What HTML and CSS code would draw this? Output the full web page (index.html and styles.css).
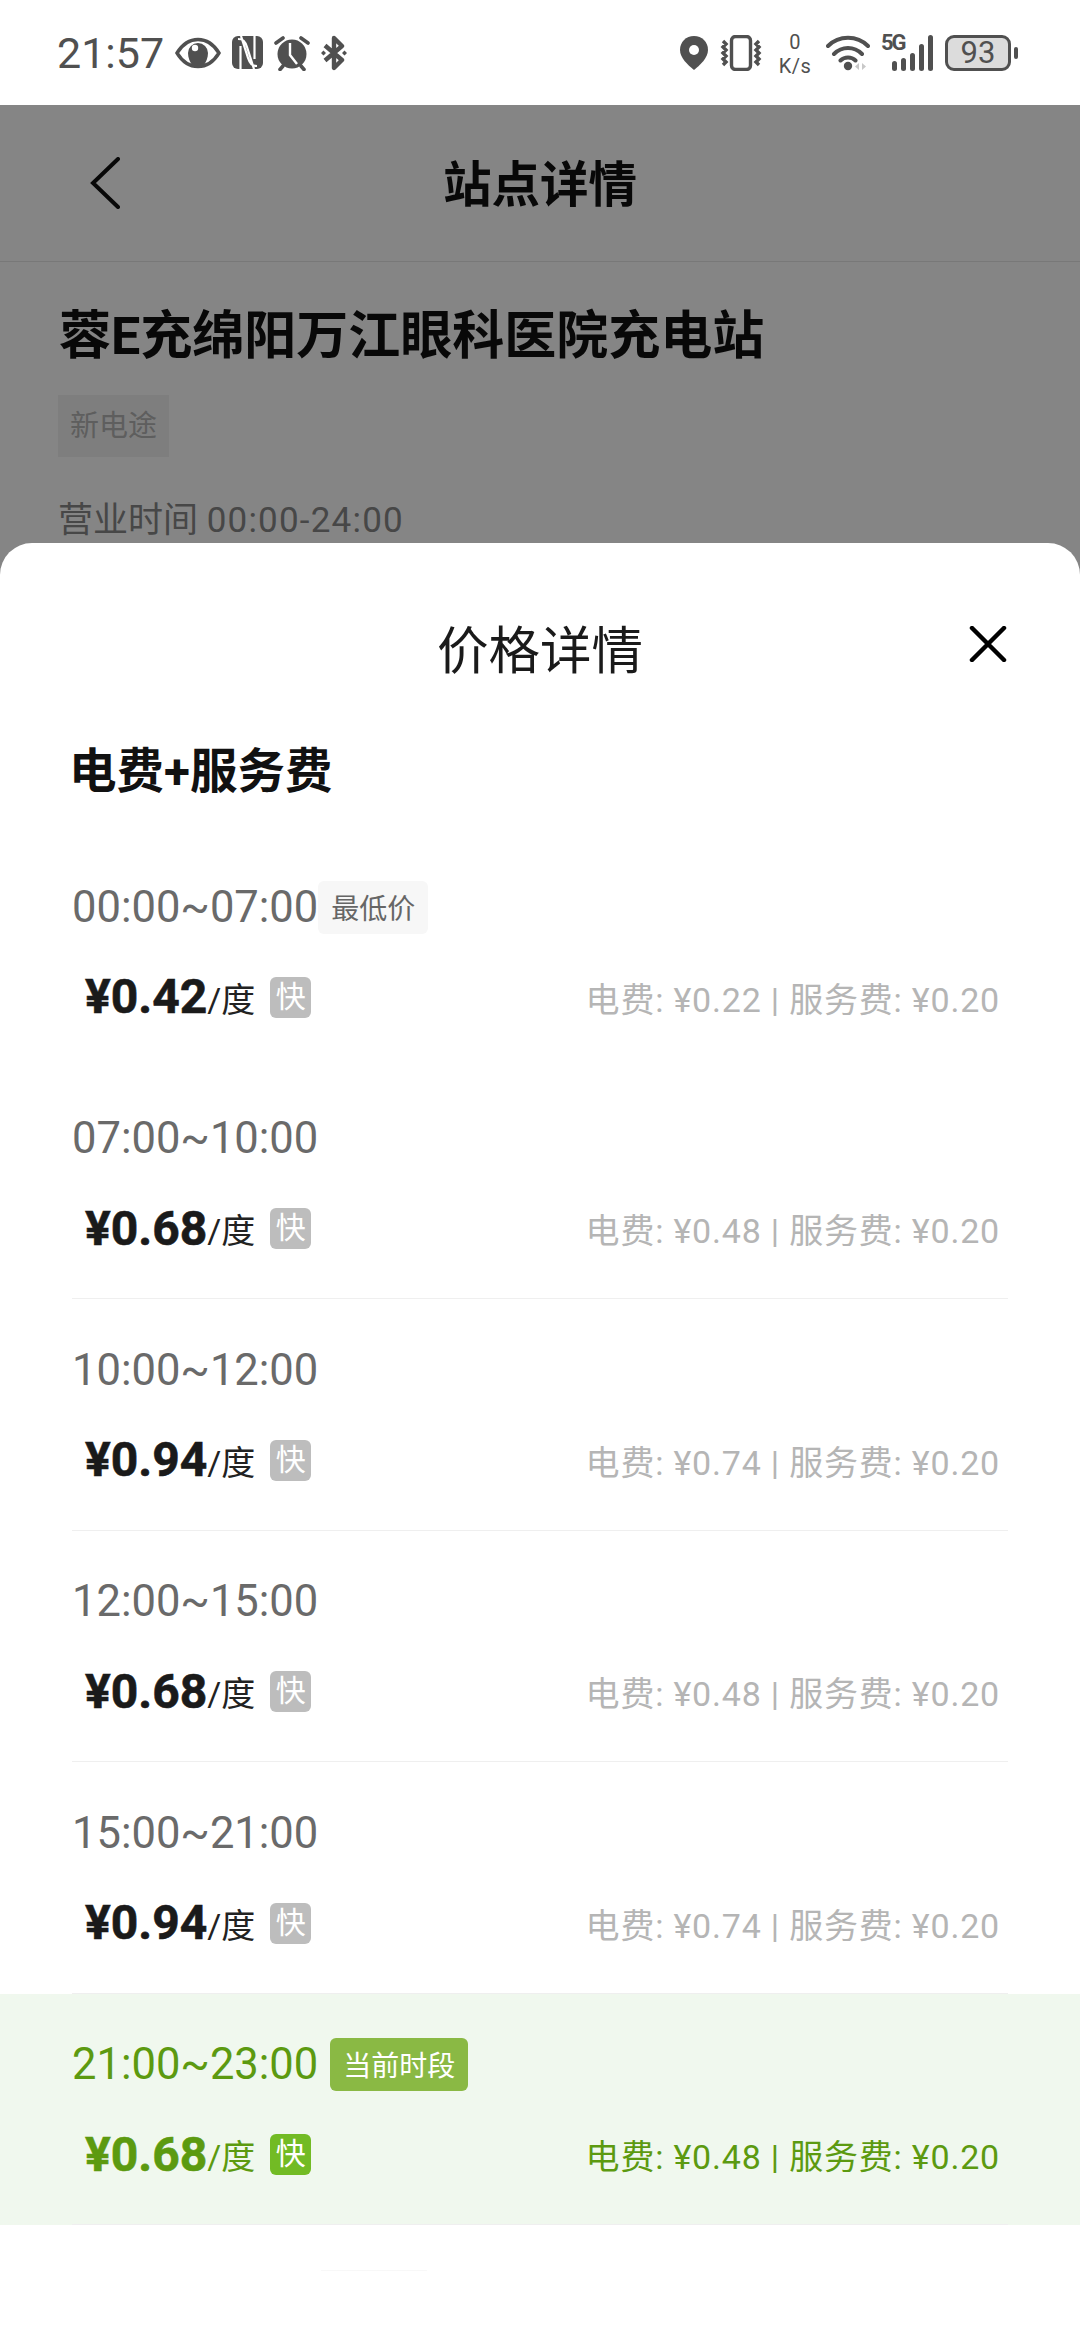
FILE: index.html
```html
<!DOCTYPE html>
<html lang="zh-CN">
<head>
	<meta charset="UTF-8">
	<meta name="viewport" content="width=device-width, initial-scale=1.0">
	<title>站点详情</title>
	<link rel="stylesheet" href="styles.css">
</head>
<body>
	<!-- status bar -->
	<div class="status">
		<div class="status-left">
			<span class="clock">21:57</span>
			<svg class="ico" width="46" height="32" viewBox="0 0 46 32">
				<path d="M2 16C7.500 7 14 2.500 23 2.500S38.500 7 44 16C38.500 25 32 29.500 23 29.500S7.500 25 2 16Z" fill="none" stroke="#505050" stroke-width="3.400"/>
				<path d="M13 16a10 10 0 0 1 20 0c0 5-2 9-4 12h-12c-2-3-4-7-4-12Z" fill="#505050"/>
				<circle cx="20" cy="11" r="3.200" fill="#fff"/>
			</svg>
			<svg class="ico nfc" width="31" height="33" viewBox="0 0 31 33">
				<rect width="31" height="33" rx="6" fill="#505050"/>
				<path d="M8.500 33V10M6 3c5 0 7 2 9 8l7 22M22.500 0v23M25 30c-5 0-7-2-9-8L9 0" fill="none" stroke="#fff" stroke-width="2.200"/>
			</svg>
			<svg class="ico alarm" width="36" height="36" viewBox="0 0 36 36">
				<circle cx="18" cy="19" r="14.500" fill="#505050"/>
				<path d="M16 8v12l7 9" fill="none" stroke="#fff" stroke-width="2.400"/>
				<path d="M2 8 9 3M34 8 27 3M9 31l-3 3.500M27 31l3 3.500" fill="none" stroke="#505050" stroke-width="3.600" stroke-linecap="round"/>
			</svg>
			<svg class="ico" width="26" height="36" viewBox="0 0 26 36">
				<path d="M4 10.500 21 25l-8 8V3l8 8L4 25.500" fill="none" stroke="#505050" stroke-width="4.400" stroke-linejoin="round"/>
				<path d="M0 18l2.500-2.500L5 18l-2.500 2.500ZM21 18l2.500-2.500L26 18l-2.500 2.500Z" fill="#505050"/>
			</svg>
		</div>
		<div class="status-right">
			<svg class="ico" width="28" height="34" viewBox="0 0 28 34">
				<path d="M14 0C6 0 0 6 0 14c0 8 8 15 14 20 6-5 14-12 14-20C28 6 22 0 14 0Z" fill="#505050"/>
				<circle cx="14" cy="14" r="5" fill="#fff"/>
			</svg>
			<svg class="ico" width="42" height="36" viewBox="0 0 42 36">
				<rect x="11.500" y="1.500" width="19" height="33" rx="4" fill="none" stroke="#505050" stroke-width="3.400"/>
				<path d="M3 6l3 3-3 3 3 3-3 3 3 3-3 3 3 3-3 3M39 6l-3 3 3 3-3 3 3 3-3 3 3 3-3 3 3 3" fill="none" stroke="#505050" stroke-width="3.400"/>
			</svg>
			<div class="speed"><span>0</span><span>K/s</span></div>
			<svg class="ico" width="44" height="36" viewBox="0 0 44 36">
				<path d="M2 11C13 0 31 0 42 11M8 19c8-8 20-8 28 0M14.500 25.500c4-4 11-4 15 0" fill="none" stroke="#505050" stroke-width="4" stroke-linecap="round"/>
				<circle cx="22" cy="31" r="4.200" fill="#505050"/>
				<path d="M33 28v7l-4-3.500ZM36 28v7l4-3.500Z" fill="#c8c8c8"/>
			</svg>
			<div class="signal">
				<span class="signal-type">5G</span>
				<div class="bars">
					<i class="bar-1"></i><i class="bar-2"></i><i class="bar-3"></i><i class="bar-4"></i><i class="bar-5"></i>
				</div>
			</div>
			<div class="battery"><div class="battery-body">93</div><i class="battery-nub"></i></div>
		</div>
	</div>

	<!-- station page, dimmed behind the sheet -->
	<div class="page">
		<div class="nav">
			<svg class="back" width="32" height="52" viewBox="0 0 32 52">
				<path d="M29 2 4 26l25 24" fill="none" stroke="#111" stroke-width="4" stroke-linecap="round"/>
			</svg>
			<h1 class="nav-title">站点详情</h1>
		</div>
		<div class="station">
			<h2 class="station-name">蓉E充绵阳万江眼科医院充电站</h2>
			<span class="station-tag">新电途</span>
			<p class="station-hours">营业时间 <span class="hours-val">00:00-24:00</span></p>
		</div>
	</div>
	<div class="mask"></div>

	<!-- price sheet -->
	<div class="sheet">
		<div class="sheet-head">
			<span class="sheet-title">价格详情</span>
			<svg class="close" width="38" height="36" viewBox="0 0 38 36">
				<path d="M3 2l32 32M35 2 3 34" fill="none" stroke="#000" stroke-width="4.500" stroke-linecap="round"/>
			</svg>
		</div>
		<h3 class="sheet-sub">电费+服务费</h3>

		<div class="row row-first">
			<div class="row-inner">
				<div class="row-time">00:00~07:00<span class="tag-low">最低价</span></div>
				<div class="row-price">
					<b>¥0.42</b><span class="unit">/度</span><span class="fast">快</span>
					<span class="fee">电费: ¥0.22 | 服务费: ¥0.20</span>
				</div>
			</div>
		</div>
		<div class="row">
			<div class="row-inner">
				<div class="row-time">07:00~10:00</div>
				<div class="row-price">
					<b>¥0.68</b><span class="unit">/度</span><span class="fast">快</span>
					<span class="fee">电费: ¥0.48 | 服务费: ¥0.20</span>
				</div>
			</div>
		</div>
		<div class="row">
			<div class="row-inner">
				<div class="row-time">10:00~12:00</div>
				<div class="row-price">
					<b>¥0.94</b><span class="unit">/度</span><span class="fast">快</span>
					<span class="fee">电费: ¥0.74 | 服务费: ¥0.20</span>
				</div>
			</div>
		</div>
		<div class="row">
			<div class="row-inner">
				<div class="row-time">12:00~15:00</div>
				<div class="row-price">
					<b>¥0.68</b><span class="unit">/度</span><span class="fast">快</span>
					<span class="fee">电费: ¥0.48 | 服务费: ¥0.20</span>
				</div>
			</div>
		</div>
		<div class="row">
			<div class="row-inner">
				<div class="row-time">15:00~21:00</div>
				<div class="row-price">
					<b>¥0.94</b><span class="unit">/度</span><span class="fast">快</span>
					<span class="fee">电费: ¥0.74 | 服务费: ¥0.20</span>
				</div>
			</div>
		</div>
		<div class="row row-now">
			<div class="row-inner">
				<div class="row-time">21:00~23:00<span class="tag-now">当前时段</span></div>
				<div class="row-price">
					<b>¥0.68</b><span class="unit">/度</span><span class="fast">快</span>
					<span class="fee">电费: ¥0.48 | 服务费: ¥0.20</span>
				</div>
			</div>
		</div>
		<div class="sheet-edge"></div>
	</div>
</body>
</html>
```

FILE: styles.css
```css
* {
	box-sizing: border-box;
}
body {
	position: relative;
	width: 1080px;
	height: 2340px;
	margin: 0;
	overflow: hidden;
	background: #fff;
	font-family: Roboto, "Noto Sans CJK SC", sans-serif;
}
h1, h2, h3, p {
	margin: 0;
}

/* status bar */
.status {
	display: flex;
	justify-content: space-between;
	align-items: center;
	height: 105px;
	padding: 0 62px 0 57px;
	color: #505050;
}
.status-left,
.status-right {
	display: flex;
	align-items: center;
}
.status-left {
	gap: 11px;
}
.status-right {
	gap: 12px;
}
.ico {
	display: block;
	flex: none;
}
.clock {
	font-size: 43px;
	line-height: 48px;
}
.speed {
	display: flex;
	flex-direction: column;
	align-items: center;
	width: 34px;
	margin: 3px 2px 0 4px;
	font-size: 20px;
	line-height: 24px;
	letter-spacing: .5px;
}
.signal {
	position: relative;
	width: 52px;
	height: 36px;
	margin-left: -1px;
}
.signal-type {
	position: absolute;
	top: -4px;
	left: 0;
	font-size: 22px;
	line-height: 24px;
	font-weight: 700;
	letter-spacing: -2px;
}
.bars {
	position: absolute;
	right: 0;
	bottom: 0;
	display: flex;
	align-items: flex-end;
	gap: 3.500px;
}
.bars i {
	display: block;
	width: 5.500px;
	background: #505050;
	border-radius: 3px;
}
.bar-1 { height: 10px; }
.bar-2 { height: 13px; }
.bar-3 { height: 18px; }
.bar-4 { height: 27px; }
.bar-5 { height: 36px; }
.battery {
	display: flex;
	align-items: center;
	gap: 3px;
}
.battery-body {
	width: 66px;
	height: 36px;
	border: 3px solid #505050;
	border-radius: 9px;
	background: #dcdcdc;
	font-size: 31px;
	line-height: 30px;
	text-align: center;
}
.battery-nub {
	display: block;
	width: 4px;
	height: 12px;
	background: #505050;
	border-radius: 2px;
}

/* page behind the sheet */
.page {
	height: 2235px;
}
.nav {
	position: relative;
	display: flex;
	justify-content: center;
	align-items: center;
	height: 157px;
	padding-top: 5px;
	border-bottom: 1px solid #e6e6e6;
}
.back {
	position: absolute;
	left: 89px;
	top: 52px;
}
.nav-title {
	font-size: 48.500px;
	line-height: 60px;
	font-weight: 700;
	color: #111;
}
.station {
	display: flex;
	flex-direction: column;
	align-items: flex-start;
	padding: 39px 58px 0;
}
.station-name {
	margin-left: 1px;
	font-size: 52px;
	line-height: 72px;
	font-weight: 700;
	color: #111;
}
.station-tag {
	margin-top: 22px;
	padding: 0 12px;
	background: #f2f2f2;
	color: #b4b4b4;
	font-size: 29px;
	line-height: 62px;
}
.station-hours {
	margin-top: 39px;
	font-size: 35px;
	line-height: 50px;
	color: #888;
}
.hours-val {
	font-size: 35px;
	letter-spacing: 1.200px;
}
.mask {
	position: absolute;
	left: 0;
	right: 0;
	top: 105px;
	bottom: 0;
	background: rgba(0, 0, 0, .48);
}

/* price sheet */
.sheet {
	position: absolute;
	left: 0;
	right: 0;
	top: 543px;
	bottom: 0;
	background: #fff;
	border-radius: 32px 32px 0 0;
}
.sheet-head {
	position: relative;
	display: flex;
	justify-content: center;
	align-items: center;
	height: 176px;
	padding-top: 42px;
}
.sheet-title {
	font-size: 51.500px;
	line-height: 70px;
	color: #1a1a1a;
}
.close {
	position: absolute;
	left: 969px;
	top: 83px;
}
.sheet-sub {
	height: 117px;
	padding: 21px 69px 0;
	font-size: 47.500px;
	line-height: 64px;
	font-weight: 700;
	color: #111;
}
.row {
	height: 231.500px;
	padding: 0 72px;
}
.row-inner {
	display: flex;
	flex-direction: column;
	height: 100%;
	padding-top: 44px;
	border-bottom: 1px solid #efefef;
}
.row-first .row-inner {
	border-bottom: 0;
}
.row-time {
	display: flex;
	align-items: center;
	height: 54px;
	font-size: 43.500px;
	color: #6a6a6a;
}
.tag-low,
.tag-now {
	display: block;
	height: 53px;
	padding: 0 13px;
	border-radius: 6px;
	font-family: "Noto Sans CJK SC", sans-serif;
	font-size: 28px;
	line-height: 52px;
}
.tag-low {
	background: #f7f7f7;
	color: #666;
}
.tag-now {
	margin-left: 12px;
	background: #8ab944;
	color: #fff;
}
.row-price {
	display: flex;
	align-items: center;
	height: 60px;
	margin-top: 33px;
	padding-left: 13px;
}
.row-price b {
	font-size: 48px;
	line-height: 60px;
	color: #1a1a1a;
	-webkit-text-stroke: .6px currentColor;
}
.unit {
	font-size: 34px;
	color: #222;
}
.fast {
	width: 41px;
	height: 41px;
	margin-left: 15px;
	border-radius: 6px;
	background: #bdbdbd;
	color: #fff;
	font-size: 30px;
	line-height: 40px;
	text-align: center;
}
.fee {
	margin-left: auto;
	padding-right: 8px;
	font-size: 34px;
	letter-spacing: .800px;
	color: #b5b5b5;
}
.row-now {
	background: #f0f8ee;
}
.row-now .row-time,
.row-now .row-price b,
.row-now .unit,
.row-now .fee {
	color: #5c9a10;
}
.row-now .fast {
	background: #72bb24;
}
.sheet-edge {
	width: 106px;
	height: 1px;
	margin: 45px 0 0 321px;
	background: #f8f8f8;
}
```
